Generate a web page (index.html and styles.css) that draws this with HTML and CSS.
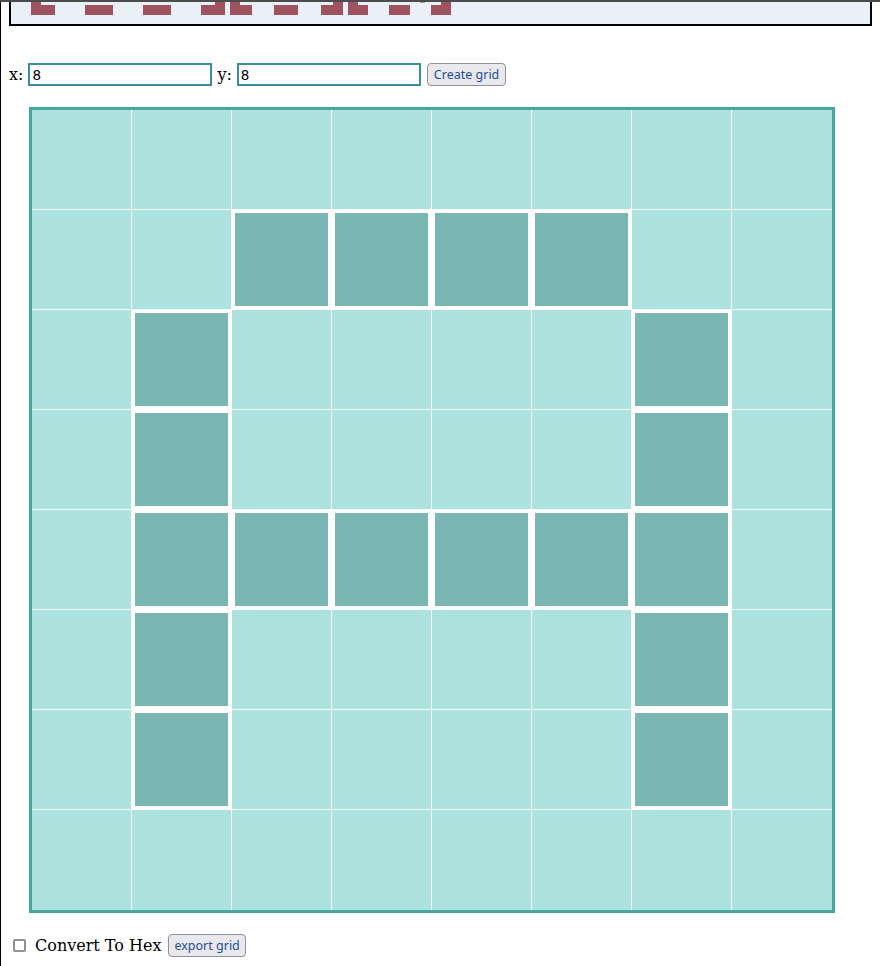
FILE: index.html
```html
<!DOCTYPE html>
<html lang="en">
<head>
    <meta charset="UTF-8">
    <meta name="viewport" content="width=device-width, initial-scale=1.0">
    <title>Pixel Grid Editor</title>
    <link rel="stylesheet" href="styles.css">
</head>
<body>
    <div class="page">
        <div class="topbar"></div>
        <div class="preview">
            <svg class="preview-art" width="859" height="22" viewBox="11 2 859 22">
                <g fill="#9e535f">
                    <rect x="31" y="5" width="24" height="10"/>
                    <rect x="85" y="5" width="28" height="10"/>
                    <rect x="143" y="5" width="28" height="10"/>
                    <rect x="201" y="5" width="24" height="10"/>
                    <rect x="230" y="5" width="22" height="10"/>
                    <rect x="274" y="5" width="24" height="10"/>
                    <rect x="321" y="5" width="22" height="10"/>
                    <rect x="348" y="5" width="20" height="10"/>
                    <rect x="389" y="5" width="21" height="10"/>
                    <rect x="431" y="5" width="20" height="10"/>
                    <rect x="31" y="2" width="10" height="3"/>
                    <rect x="215" y="2" width="10" height="3"/>
                    <rect x="230" y="2" width="10" height="3"/>
                    <rect x="333" y="2" width="10" height="3"/>
                    <rect x="348" y="2" width="10" height="3"/>
                    <rect x="441" y="2" width="10" height="3"/>
                </g>
                <rect x="420" y="2" width="5" height="1" fill="#8fa3ad"/>
            </svg>
        </div>

        <div class="controls">
            <label for="sizeX">x:</label> <input type="text" id="sizeX" class="dim" value="8">
            <label for="sizeY">y:</label> <input type="text" id="sizeY" class="dim" value="8">
            <button id="createGrid">Create grid</button>
        </div>

        <div class="board" id="board"></div>

        <div class="export">
            <input type="checkbox" id="toHex"> <label for="toHex">Convert To Hex</label>
            <button id="exportGrid">export grid</button>
        </div>
    </div>

    <script>
        // letter "A" pattern, 1 = filled
        const pattern = [
            "00000000",
            "00111100",
            "01000010",
            "01000010",
            "01111110",
            "01000010",
            "01000010",
            "00000000"
        ];

        const board = document.getElementById('board');
        pattern.forEach(row => {
            for (const ch of row) {
                const cell = document.createElement('div');
                cell.className = ch === '1' ? 'cell on' : 'cell';
                board.appendChild(cell);
            }
        });
    </script>
</body>
</html>
```

FILE: styles.css
```css
* {
    box-sizing: border-box;
}

body {
    margin: 0;
    background: #fff;
    color: #000;
    font-family: 'DejaVu Serif', serif;
    font-size: 16px;
}

.page {
    border-left: 1px solid #000;
    min-height: 966px;
    padding: 0 8px;
}

.topbar {
    height: 2px;
    background: #4b4b4b;
    margin: 0 -8px 0 -9px;
}

.preview {
    width: 863px;
    height: 24px;
    background: #e9f0f7;
    border: 2px solid #000;
    border-top: none;
    overflow: hidden;
}

.preview-art {
    display: block;
}

.controls {
    margin-top: 37px;
    height: 23px;
    display: flex;
    align-items: center;
}

.controls label {
    margin-right: 5px;
}

.dim {
    width: 184px;
    height: 23px;
    border: 2px solid #3a8ea4;
    padding: 0 2px;
    font-family: 'DejaVu Sans', sans-serif;
    font-size: 13.5px;
    margin-right: 5px;
    outline: none;
}

button {
    height: 23px;
    padding: 0 6px;
    background: #e9e9ed;
    border: 1px solid #8f8f9d;
    border-radius: 4px;
    color: #1f4d9b;
    font-family: 'Noto Sans', sans-serif;
    font-size: 12.5px;
    cursor: pointer;
}

#createGrid {
    margin-left: 1px;
}

button:hover {
    background: #d0d0d7;
}

.board {
    margin: 21px 0 0 20px;
    width: 806px;
    height: 806px;
    border: 3px solid #46a8a0;
    background: #ade3de;
    display: grid;
    grid-template-columns: repeat(8, 100px);
    grid-template-rows: repeat(8, 100px);
}

.cell {
    background: #ade3de;
    border-right: 1px solid #fff;
    border-bottom: 1px solid #fff;
}

.cell:nth-child(8n) {
    border-right: none;
}

.cell:nth-child(n+57) {
    border-bottom: none;
}

.cell.on {
    background: #7bb7b2;
    box-shadow: inset 0 0 0 3px #fff;
}

.export {
    margin-top: 21px;
    display: flex;
    align-items: center;
}

.export input[type="checkbox"] {
    appearance: none;
    width: 13px;
    height: 13px;
    margin: 0 3px 0 4px;
    border: 2px solid #8f8f9d;
    border-radius: 2px;
    background: #fff;
}

.export label {
    margin: 0 7px 0 6px;
}

#exportGrid {
    height: 23px;
    padding: 0 5px;
}
```
